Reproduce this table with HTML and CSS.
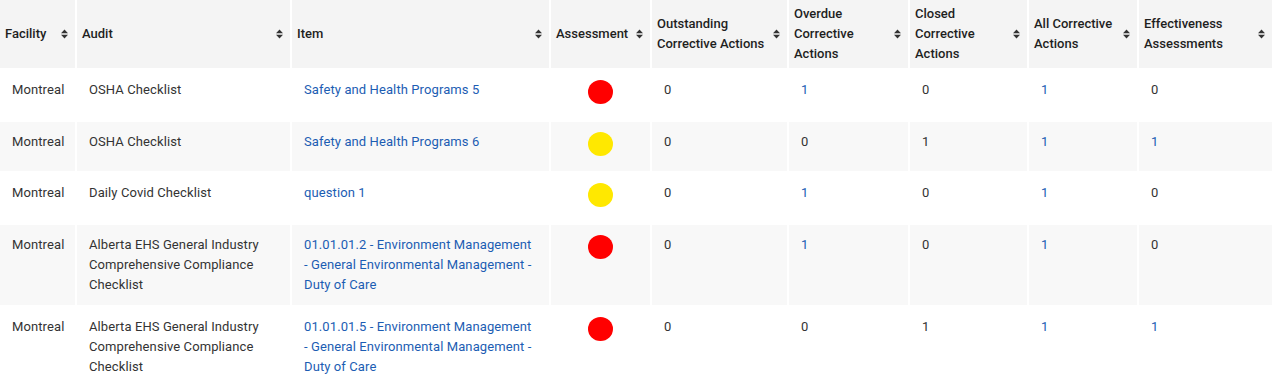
FILE: index.html
```html
<!DOCTYPE html>
<html>
<head>
<meta charset="utf-8">
<link rel="stylesheet" href="styles.css">
</head>
<body>
<table class="grid">
  <thead>
    <tr>
      <th class="c-fac"><div class="th-in"><span>Facility</span><svg class="sort" viewBox="0 0 7 10"><path d="M0 4.2L3.5 0.4L7 4.2Z M0 5.8L3.5 9.6L7 5.8Z"/></svg></div></th>
      <th class="c-aud"><div class="th-in"><span>Audit</span><svg class="sort" viewBox="0 0 7 10"><path d="M0 4.2L3.5 0.4L7 4.2Z M0 5.8L3.5 9.6L7 5.8Z"/></svg></div></th>
      <th class="c-item"><div class="th-in"><span>Item</span><svg class="sort" viewBox="0 0 7 10"><path d="M0 4.2L3.5 0.4L7 4.2Z M0 5.8L3.5 9.6L7 5.8Z"/></svg></div></th>
      <th class="c-ass"><div class="th-in"><span>Assessment</span><svg class="sort" viewBox="0 0 7 10"><path d="M0 4.2L3.5 0.4L7 4.2Z M0 5.8L3.5 9.6L7 5.8Z"/></svg></div></th>
      <th class="c-out"><div class="th-in"><span>Outstanding Corrective Actions</span><svg class="sort" viewBox="0 0 7 10"><path d="M0 4.2L3.5 0.4L7 4.2Z M0 5.8L3.5 9.6L7 5.8Z"/></svg></div></th>
      <th class="c-ovd"><div class="th-in"><span>Overdue Corrective Actions</span><svg class="sort" viewBox="0 0 7 10"><path d="M0 4.2L3.5 0.4L7 4.2Z M0 5.8L3.5 9.6L7 5.8Z"/></svg></div></th>
      <th class="c-clo"><div class="th-in"><span>Closed Corrective Actions</span><svg class="sort" viewBox="0 0 7 10"><path d="M0 4.2L3.5 0.4L7 4.2Z M0 5.8L3.5 9.6L7 5.8Z"/></svg></div></th>
      <th class="c-all"><div class="th-in"><span>All Corrective Actions</span><svg class="sort" viewBox="0 0 7 10"><path d="M0 4.2L3.5 0.4L7 4.2Z M0 5.8L3.5 9.6L7 5.8Z"/></svg></div></th>
      <th class="c-eff"><div class="th-in"><span>Effectiveness Assessments</span><svg class="sort" viewBox="0 0 7 10"><path d="M0 4.2L3.5 0.4L7 4.2Z M0 5.8L3.5 9.6L7 5.8Z"/></svg></div></th>
    </tr>
  </thead>
  <tbody>
    <tr>
      <td>Montreal</td>
      <td>OSHA Checklist</td>
      <td><a class="lnk" href="#">Safety and Health Programs 5</a></td>
      <td class="ass"><span class="dot red"></span></td>
      <td>0</td>
      <td><a class="lnk" href="#">1</a></td>
      <td>0</td>
      <td><a class="lnk" href="#">1</a></td>
      <td>0</td>
    </tr>
    <tr>
      <td>Montreal</td>
      <td>OSHA Checklist</td>
      <td><a class="lnk" href="#">Safety and Health Programs 6</a></td>
      <td class="ass"><span class="dot yellow"></span></td>
      <td>0</td>
      <td>0</td>
      <td>1</td>
      <td><a class="lnk" href="#">1</a></td>
      <td><a class="lnk" href="#">1</a></td>
    </tr>
    <tr>
      <td>Montreal</td>
      <td>Daily Covid Checklist</td>
      <td><a class="lnk" href="#">question 1</a></td>
      <td class="ass"><span class="dot yellow"></span></td>
      <td>0</td>
      <td><a class="lnk" href="#">1</a></td>
      <td>0</td>
      <td><a class="lnk" href="#">1</a></td>
      <td>0</td>
    </tr>
    <tr>
      <td>Montreal</td>
      <td>Alberta EHS General Industry Comprehensive Compliance Checklist</td>
      <td><a class="lnk" href="#">01.01.01.2 - Environment Management - General Environmental Management - Duty of Care</a></td>
      <td class="ass"><span class="dot red"></span></td>
      <td>0</td>
      <td><a class="lnk" href="#">1</a></td>
      <td>0</td>
      <td><a class="lnk" href="#">1</a></td>
      <td>0</td>
    </tr>
    <tr>
      <td>Montreal</td>
      <td>Alberta EHS General Industry Comprehensive Compliance Checklist</td>
      <td><a class="lnk" href="#">01.01.01.5 - Environment Management - General Environmental Management - Duty of Care</a></td>
      <td class="ass"><span class="dot red"></span></td>
      <td>0</td>
      <td>0</td>
      <td>1</td>
      <td><a class="lnk" href="#">1</a></td>
      <td><a class="lnk" href="#">1</a></td>
    </tr>
  </tbody>
</table>
</body>
</html>
```

FILE: styles.css
```css
html, body {
  margin: 0;
  padding: 0;
  background: #ffffff;
}

body {
  font-family: Roboto, "Liberation Sans", Arial, sans-serif;
  font-size: 13px;
  color: #333333;
  overflow: hidden;
}

.grid {
  border-collapse: separate;
  border-spacing: 2px;
  table-layout: fixed;
  width: 1276px;
  margin: -2px 0 0 -2px;
}

.grid th {
  box-sizing: border-box;
  background: #f4f4f4;
  height: 68px;
  padding: 4px 7px 4px 5px;
  vertical-align: middle;
  text-align: left;
  font-weight: 500;
  color: #1f1f1f;
  line-height: 20px;
}

.th-in {
  display: flex;
  align-items: center;
  gap: 5px;
}

.th-in span {
  flex: 1 1 auto;
  min-width: 0;
}

.sort {
  flex: 0 0 auto;
  width: 7px;
  height: 10px;
  fill: #333333;
}

.c-fac { width: 75px; }
.c-aud { width: 213px; }
.c-item { width: 257px; }
.c-ass { width: 99px; }
.c-out { width: 135px; }
.c-ovd { width: 119px; }
.c-clo { width: 117px; }
.c-all { width: 108px; }
.c-eff { width: 133px; }

.grid td {
  height: 29.6px;
  padding: 10px 12px;
  vertical-align: top;
  line-height: 20px;
  letter-spacing: 0.1px;
  color: #333333;
}

.grid tbody tr:nth-child(even) td {
  background: #f8f8f8;
}

.lnk {
  color: #1c5db3;
  text-decoration: none;
}

.ass {
  text-align: center;
}

.dot {
  display: inline-block;
  width: 25px;
  height: 24px;
  border-radius: 50%;
  vertical-align: top;
}

.red { background: #ff0000; }
.yellow { background: #ffe800; }
```
